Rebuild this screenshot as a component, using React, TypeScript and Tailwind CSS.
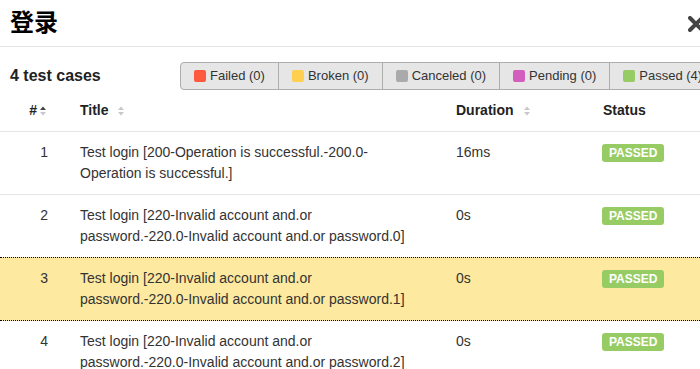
import React from "react";

type Row = { id: number; title: string[]; duration: string; active?: boolean };

const rows: Row[] = [
  { id: 1, title: ["Test login [200-Operation is successful.-200.0-", "Operation is successful.]"], duration: "16ms" },
  { id: 2, title: ["Test login [220-Invalid account and.or", "password.-220.0-Invalid account and.or password.0]"], duration: "0s" },
  { id: 3, title: ["Test login [220-Invalid account and.or", "password.-220.0-Invalid account and.or password.1]"], duration: "0s", active: true },
  { id: 4, title: ["Test login [220-Invalid account and.or", "password.-220.0-Invalid account and.or password.2]"], duration: "0s" },
];

const filters = [
  { label: "Failed (0)", color: "bg-[#fd5a3e]" },
  { label: "Broken (0)", color: "bg-[#ffd050]" },
  { label: "Canceled (0)", color: "bg-[#aaaaaa]" },
  { label: "Pending (0)", color: "bg-[#d35ebe]" },
  { label: "Passed (4)", color: "bg-[#97cc64]" },
];

const SortIcon = ({ active }: { active?: boolean }) => (
  <svg width="6" height="10" viewBox="0 0 6 10" className="inline-block shrink-0">
    <path d="M0 4 L3 0.5 L6 4 Z" fill={active ? "#444" : "#c8c8c8"} />
    <path d="M0 6 L3 9.5 L6 6 Z" fill="#c8c8c8" />
  </svg>
);

const rowBorder = (r: Row) => {
  if (r.active) return "bg-[#fde9a0] border-y border-dotted border-black";
  if (r.id === 2) return "";
  return "border-b border-[#e6e6e6]";
};

export default function App() {
  return (
    <div className="w-[700px] h-[369px] overflow-hidden bg-white text-[#333] font-['Liberation_Sans','Noto_Sans_CJK_SC',sans-serif]">
      <div className="h-[47px] border-b border-[#e5e5e5] flex items-center justify-between pl-[10px]">
        <h2 className="text-[24px] font-bold text-black leading-none">登录</h2>
        <svg width="16" height="16" viewBox="0 0 16 16" className="-mr-[4px] mt-[2px] shrink-0">
          <path d="M2 2 L14 14 M14 2 L2 14" stroke="#444" strokeWidth="4" strokeLinecap="round" />
        </svg>
      </div>

      <div className="flex items-center mt-[15px] h-[28px] pl-[10px] whitespace-nowrap">
        <div className="w-[170px] shrink-0 text-[16px] font-bold text-[#222]">4 test cases</div>
        <div className="flex shrink-0 h-[28px] border border-[#adadad] rounded-l-[4px] bg-[#e6e6e6]">
          {filters.map((f, i) => (
            <div
              key={f.label}
              className={`flex shrink-0 items-center gap-[4px] px-[13px] text-[13px] text-[#333] ${i > 0 ? "border-l border-[#adadad]" : ""}`}
            >
              <span className={`w-[12px] h-[12px] rounded-[2px] ${f.color}`} />
              {f.label}
            </div>
          ))}
        </div>
      </div>

      <div className="grid grid-cols-[65px_376px_147px_1fr] h-[42px] items-center border-b border-[#e6e6e6] text-[14px] font-bold text-[#222]">
        <div className="text-right pr-[19px] flex items-center justify-end gap-[3px]">
          # <SortIcon active />
        </div>
        <div className="pl-[15px] flex items-center gap-[9px]">
          Title <SortIcon />
        </div>
        <div className="pl-[15px] flex items-center gap-[10px]">
          Duration <SortIcon />
        </div>
        <div className="pl-[15px]">Status</div>
      </div>

      {rows.map((r) => (
        <div key={r.id} className={`grid grid-cols-[65px_376px_147px_1fr] py-[10px] text-[14px] leading-[21px] ${rowBorder(r)}`}>
          <div className="text-right pr-[17px]">{r.id}</div>
          <div className="pl-[15px]">
            {r.title.map((t) => (
              <div key={t} className="whitespace-nowrap">{t}</div>
            ))}
          </div>
          <div className="pl-[15px]">{r.duration}</div>
          <div className="pl-[14px]">
            <span className="inline-block mt-[2px] h-[18px] px-[7px] rounded-[3px] bg-[#97cc64] text-white text-[12px] font-bold leading-[18px]">
              PASSED
            </span>
          </div>
        </div>
      ))}
    </div>
  );
}
